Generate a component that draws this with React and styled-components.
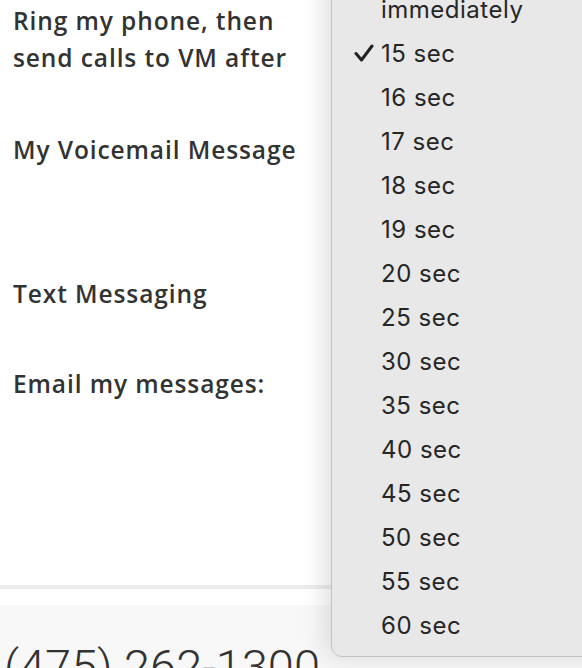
import React from "react";
import styled, { createGlobalStyle } from "styled-components";

const GlobalStyle = createGlobalStyle`
  html, body {
    margin: 0;
    padding: 0;
    background: #ffffff;
    overflow: hidden;
  }
  body {
    width: 582px;
    height: 668px;
  }
`;

const delays = [
  "immediately",
  "15 sec",
  "16 sec",
  "17 sec",
  "18 sec",
  "19 sec",
  "20 sec",
  "25 sec",
  "30 sec",
  "35 sec",
  "40 sec",
  "45 sec",
  "50 sec",
  "55 sec",
  "60 sec",
];

const CheckMark = () => (
  <svg width="20" height="18" viewBox="0 0 20 18">
    <polyline
      points="2,9.5 7.5,16 18,2"
      fill="none"
      stroke="#222"
      strokeWidth="3"
      strokeLinecap="round"
      strokeLinejoin="round"
    />
  </svg>
);

const App = () => {
  const selected = "15 sec";
  return (
    <Page>
      <GlobalStyle />
      <Settings>
        <Label $gap={2}>
          Ring my phone, then
          <br />
          send calls to VM after
        </Label>
        <Label $gap={55}>My Voicemail Message</Label>
        <Label $gap={107}>Text Messaging</Label>
        <Label $gap={53}>Email my messages:</Label>
      </Settings>
      <Rule />
      <Footer>
        <Phone>(475) 262-1300</Phone>
      </Footer>

      <Menu>
        {delays.map((d) => (
          <Item key={d}>
            <Check>{d === selected && <CheckMark />}</Check>
            {d}
          </Item>
        ))}
      </Menu>
    </Page>
  );
};

const Page = styled.div`
  position: relative;
  width: 582px;
  height: 668px;
  overflow: hidden;
  background: #fff;
`;

const Settings = styled.div`
  display: flex;
  flex-direction: column;
  padding: 0 13px;
  height: 585px;
`;

const Label = styled.div`
  margin-top: ${(p) => p.$gap}px;
  font-family: "Open Sans", "Lato", sans-serif;
  font-weight: 600;
  font-size: 24.5px;
  line-height: 37px;
  letter-spacing: 0.9px;
  color: #333;
  white-space: nowrap;
`;

const Rule = styled.div`
  height: 4px;
  background: #ececec;
`;

const Footer = styled.div`
  margin-top: 16px;
  height: 63px;
  background: #f8f8f8;
  padding-left: 4px;
  overflow: hidden;
`;

const Phone = styled.div`
  padding-top: 36px;
  font-family: "Roboto", "Liberation Sans", sans-serif;
  font-weight: 300;
  font-size: 47px;
  line-height: 52px;
  color: #333;
  white-space: nowrap;
`;

const Menu = styled.div`
  position: absolute;
  left: 331px;
  top: -36px;
  width: 290px;
  padding: 22px 0 9px;
  background: #e8e8e8;
  border: 1px solid #c3c3c3;
  border-radius: 11px;
  box-shadow: -6px 0 26px rgba(0, 0, 0, 0.13);
`;

const Item = styled.div`
  display: flex;
  align-items: center;
  height: 44px;
  font-family: "Inter", "Liberation Sans", sans-serif;
  font-size: 24px;
  letter-spacing: 0.5px;
  color: #262626;
  white-space: nowrap;
`;

const Check = styled.span`
  display: flex;
  align-items: center;
  justify-content: center;
  width: 49px;
  padding-left: 14px;
  box-sizing: border-box;
`;

export default App;
